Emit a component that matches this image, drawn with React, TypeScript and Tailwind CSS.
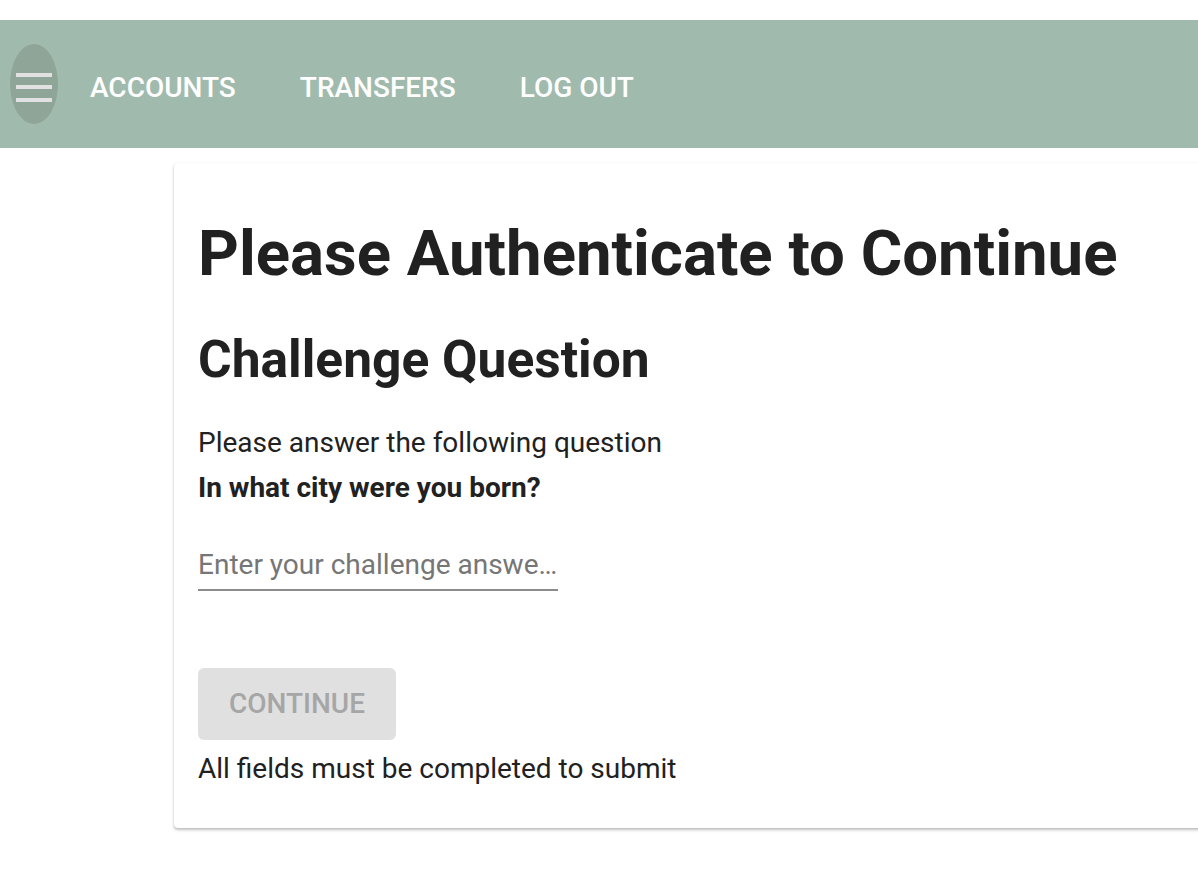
import React, { useState } from 'react';

const NavLink: React.FC<{ label: string }> = ({ label }) => (
  <a href="#" className="text-[28px] font-medium uppercase text-white leading-none">
    {label}
  </a>
);

export default function App() {
  const [answer, setAnswer] = useState('');

  return (
    <div className="min-h-[894px] w-full overflow-hidden bg-white font-['Roboto',sans-serif] text-[#212121]">
      <div className="h-5" />
      <header className="flex h-[128px] items-center bg-[#a0bbad]">
        <button className="ml-[10px] flex h-[80px] w-[48px] flex-col items-center justify-center gap-[8.5px] rounded-[50%] bg-[#8ea598] pt-[6px]">
          <span className="block h-[4px] w-[36px] bg-[#e1e1e1]" />
          <span className="block h-[4px] w-[36px] bg-[#e1e1e1]" />
          <span className="block h-[4px] w-[36px] bg-[#e1e1e1]" />
        </button>
        <nav className="ml-[32px] flex items-center gap-[64px] pt-[8px]">
          <NavLink label="Accounts" />
          <NavLink label="Transfers" />
          <NavLink label="Log Out" />
        </nav>
      </header>

      <main className="pl-[174px] pt-[15px]">
        <div className="w-[1100px] rounded-[4px] bg-white px-[24px] pb-[42px] pt-[53px] shadow-[0_2px_3px_rgba(0,0,0,0.25),0_0_1px_rgba(0,0,0,0.15)]">
          <h1 className="text-[63.5px] font-bold leading-[76px]">Please Authenticate to Continue</h1>
          <h2 className="mt-[38px] text-[51.5px] font-bold leading-[60px]">Challenge Question</h2>
          <p className="mt-[30px] text-[28px] leading-[45px]">Please answer the following question</p>
          <p className="text-[28px] font-bold leading-[45px]">In what city were you born?</p>
          <div className="mt-[37px] w-[360px] border-b-2 border-[#8c8c8c]">
            <input
              value={answer}
              onChange={(e) => setAnswer(e.target.value)}
              placeholder="Enter your challenge answer here"
              className="w-full truncate bg-transparent pb-[6px] text-[28px] leading-[36px] outline-none placeholder:text-[#767676]"
            />
          </div>
          <button
            disabled={!answer}
            className="mt-[77px] flex h-[72px] w-[198px] items-center justify-center rounded-[6px] bg-[#e0e0e0] text-[28px] font-medium uppercase text-[#a6a6a6]"
          >
            Continue
          </button>
          <p className="mt-[12px] text-[28px] leading-[34px]">All fields must be completed to submit</p>
        </div>
      </main>
    </div>
  );
}
